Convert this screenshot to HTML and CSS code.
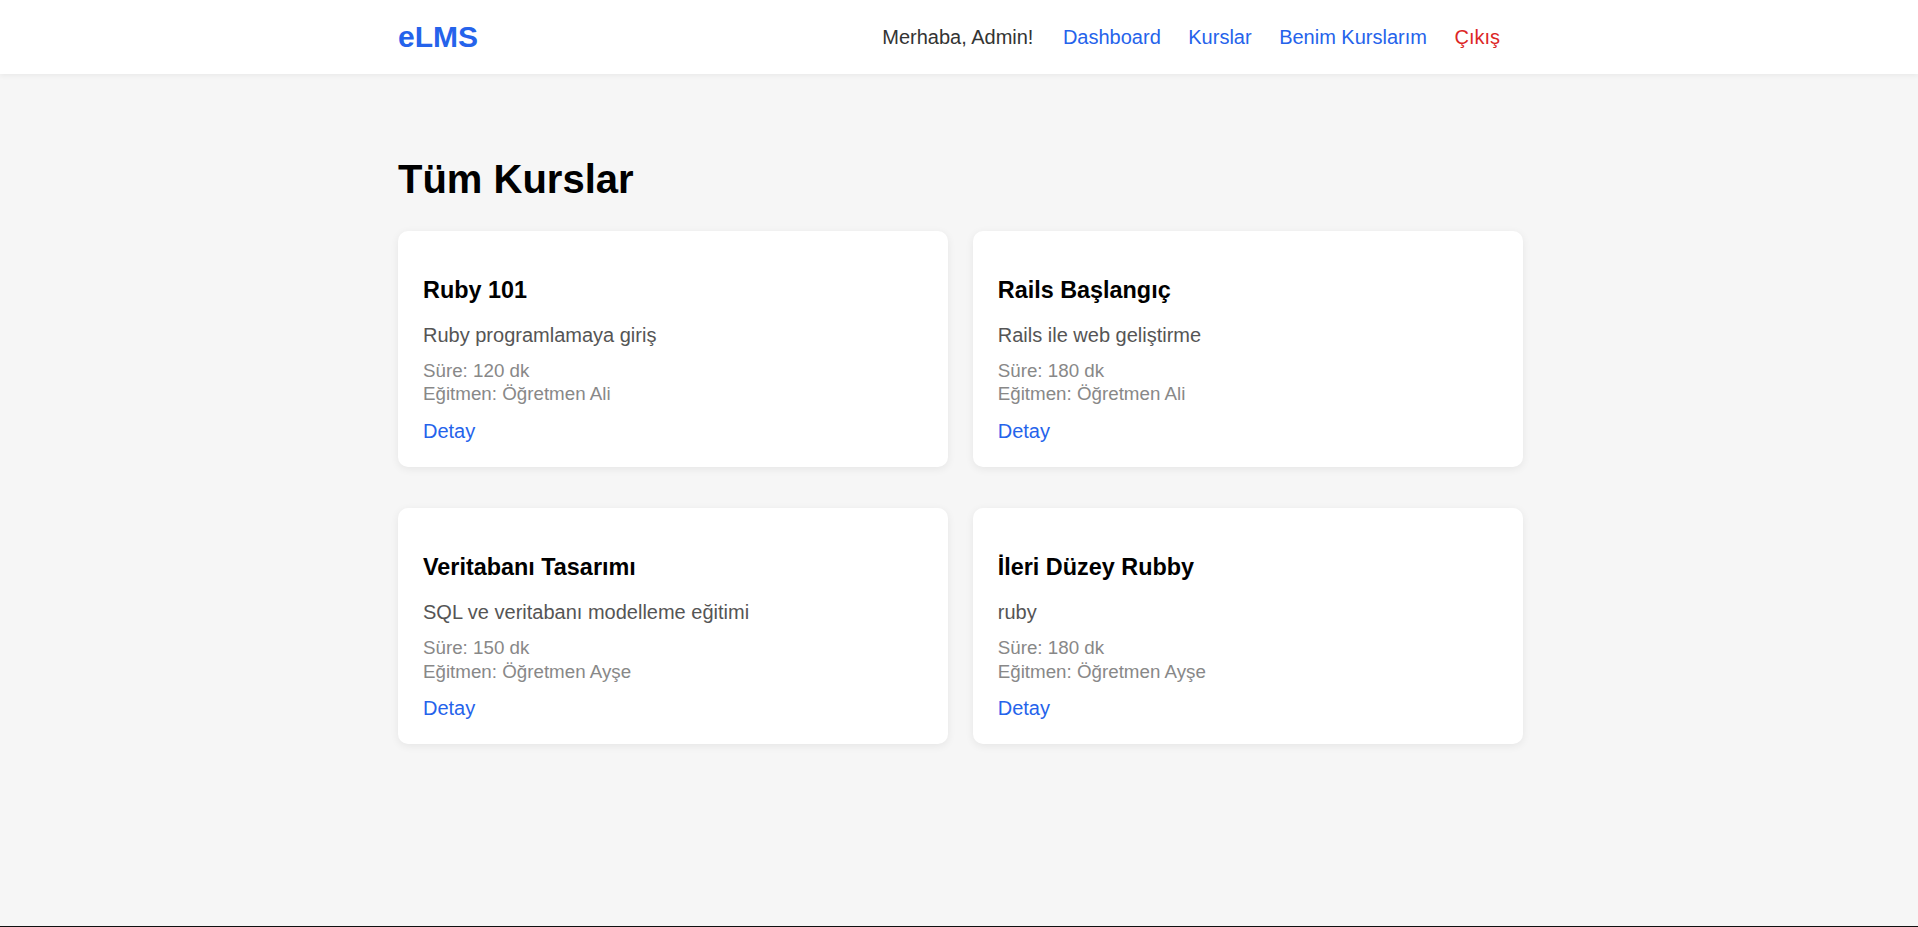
FILE: index.html
```html
<!DOCTYPE html>
<html lang="tr">
<head>
<meta charset="utf-8">
<title>eLMS - Tüm Kurslar</title>
<link rel="stylesheet" href="styles.css">
</head>
<body>
<header class="site-header">
  <div class="header-inner">
    <a class="logo" href="#">eLMS</a>
    <nav class="nav">
      <span class="greeting">Merhaba, Admin!</span>
      <a class="nav-link" href="#">Dashboard</a>
      <a class="nav-link" href="#">Kurslar</a>
      <a class="nav-link" href="#">Benim Kurslarım</a>
      <a class="nav-link logout" href="#">Çıkış</a>
    </nav>
  </div>
</header>
<main class="main">
  <div class="container">
    <h1 class="page-title">Tüm Kurslar</h1>
    <div class="course-grid">
      <div class="card">
        <h3 class="card-title">Ruby 101</h3>
        <p class="card-desc">Ruby programlamaya giriş</p>
        <p class="card-meta">Süre: 120 dk<br>Eğitmen: Öğretmen Ali</p>
        <a class="card-link" href="#">Detay</a>
      </div>
      <div class="card">
        <h3 class="card-title">Rails Başlangıç</h3>
        <p class="card-desc">Rails ile web geliştirme</p>
        <p class="card-meta">Süre: 180 dk<br>Eğitmen: Öğretmen Ali</p>
        <a class="card-link" href="#">Detay</a>
      </div>
      <div class="card">
        <h3 class="card-title">Veritabanı Tasarımı</h3>
        <p class="card-desc">SQL ve veritabanı modelleme eğitimi</p>
        <p class="card-meta">Süre: 150 dk<br>Eğitmen: Öğretmen Ayşe</p>
        <a class="card-link" href="#">Detay</a>
      </div>
      <div class="card">
        <h3 class="card-title">İleri Düzey Rubby</h3>
        <p class="card-desc">ruby</p>
        <p class="card-meta">Süre: 180 dk<br>Eğitmen: Öğretmen Ayşe</p>
        <a class="card-link" href="#">Detay</a>
      </div>
    </div>
  </div>
</main>
<footer class="site-footer"></footer>
</body>
</html>
```
FILE: styles.css
```css
* { box-sizing: border-box; }

html, body {
  margin: 0;
  padding: 0;
}

body {
  font-family: "Liberation Sans", Arial, Helvetica, sans-serif;
  font-size: 20px;
  background: #f6f6f6;
  color: #222;
}

a { text-decoration: none; }

.site-header {
  background: #fff;
  height: 73.5px;
  box-shadow: 0 2px 5px rgba(0, 0, 0, 0.05);
  position: relative;
  z-index: 1;
}

.header-inner {
  width: 1128px;
  padding-left: 3px;
  margin: 0 auto;
  height: 100%;
  display: flex;
  align-items: center;
  justify-content: space-between;
}

.logo {
  font-size: 30px;
  font-weight: bold;
  color: #2563eb;
}

.nav {
  display: flex;
  align-items: center;
  gap: 27.5px;
  padding-right: 23px;
  font-size: 20px;
  padding-top: 1px;
}

.greeting {
  color: #333;
  margin-right: 2px;
}

.nav-link { color: #2563eb; }

.nav-link.logout { color: #dc2626; }

.main {
  min-height: calc(100vh - 75px);
  padding-top: 83.5px;
}

.container {
  width: 1128px;
  padding-left: 3px;
  margin: 0 auto;
}

.page-title {
  font-size: 40px;
  font-weight: bold;
  color: #000;
  margin: 0 0 28.7px;
  line-height: normal;
}

.course-grid {
  display: grid;
  grid-template-columns: 1fr 1fr;
  column-gap: 24.5px;
  row-gap: 41.6px;
}

.card {
  background: #fff;
  border-radius: 10px;
  box-shadow: 0 2px 8px rgba(0, 0, 0, 0.07);
  padding: 25px 25px 24px;
  height: 236px;
}

.card-title {
  font-size: 23.4px;
  font-weight: bold;
  color: #000;
  margin: 21px 0 20px;
  line-height: normal;
}

.card-desc {
  font-size: 20px;
  color: #555;
  margin: 0 0 12.2px;
  line-height: normal;
}

.card-meta {
  font-size: 18.75px;
  line-height: 23.3px;
  color: #888;
  margin: 0 0 14.2px;
}

.card-link {
  display: inline-block;
  font-size: 20px;
  color: #2563eb;
  line-height: normal;
}

.site-footer {
  background: #111;
  height: 60px;
}
```
